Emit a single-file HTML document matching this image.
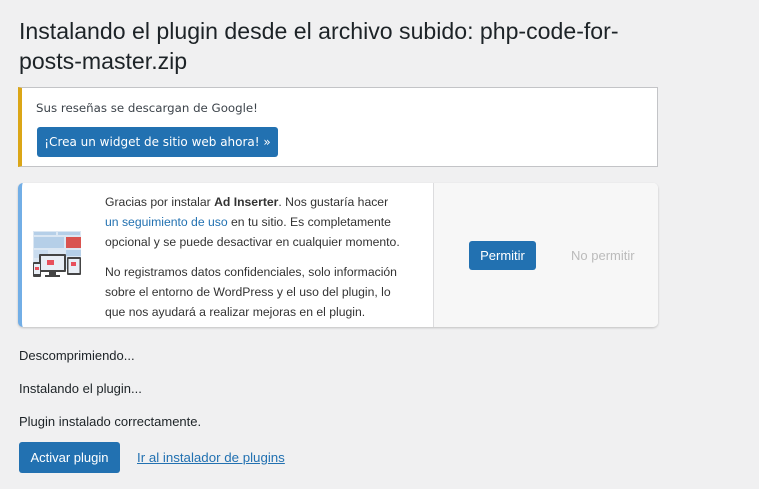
<!DOCTYPE html>
<html><head><meta charset="utf-8"><style>
body{margin:0;background:#f0f0f1;font-family:"Liberation Sans",sans-serif;color:#1d2327;width:759px;height:489px;overflow:hidden;position:relative}
.a{position:absolute}
h1{position:absolute;left:19px;top:16px;margin:0;font-weight:400;font-size:23.1px;line-height:30px;width:640px}
.notice{left:18px;top:87px;width:635px;height:78px;background:#fff;border:1px solid #c3c4c7;border-left:4px solid #dba617}
.notice p{position:absolute;left:14px;top:13px;margin:0;font-family:"DejaVu Sans",sans-serif;font-size:11.8px;color:#3c434a}
.btn{background:#2271b1;color:#fff;border-radius:3px;position:absolute}
.notice .btn{left:15px;top:39px;width:241px;height:30px;font-family:"DejaVu Sans",sans-serif;font-size:12px;line-height:30px;text-align:center}
.card{left:18px;top:183px;width:640px;height:144px;background:#fff;border-radius:5px;box-shadow:0 1px 2px rgba(0,0,0,.2);overflow:hidden;border-left:4px solid #72aee6;box-sizing:border-box}
.right{position:absolute;left:411px;top:0;width:229px;height:144px;background:#f7f7f7;border-left:1px solid #dcdcde}
.txt{position:absolute;left:83px;top:9px;width:320px;font-size:12.2px;line-height:20px;color:#333;white-space:nowrap}
.txt p{margin:0 0 10px}
.txt a{color:#2271b1;text-decoration:none}
.st{left:19px;font-size:13px}
</style></head><body>
<h1>Instalando el plugin desde el archivo subido: php-code-for-posts-master.zip</h1>
<div class="a notice"><p>Sus reseñas se descargan de Google!</p><div class="btn">¡Crea un widget de sitio web ahora! »</div></div>
<div class="a card">
<svg class="a" style="left:11px;top:48px" width="50" height="50" viewBox="0 0 50 50">
<rect x="0" y="0" width="48" height="38" fill="#dbe7f3"/>
<rect x="1" y="1" width="22" height="3" fill="#b5cfe8"/><rect x="25" y="1" width="22" height="3" fill="#b5cfe8"/>
<rect x="1" y="6" width="30" height="11" fill="#b5cfe8"/><rect x="33" y="6" width="15" height="11" fill="#d9534f"/>
<rect x="1" y="19" width="14" height="8" fill="#c9dcef"/><rect x="33" y="19" width="15" height="6" fill="#b5cfe8"/>
<rect x="6" y="23" width="27" height="18" rx="1" fill="#444"/><rect x="8" y="25" width="23" height="14" fill="#e8eef5"/>
<rect x="14" y="29" width="7" height="5" fill="#e8505b"/><rect x="16" y="41" width="7" height="3" fill="#444"/><rect x="12" y="44" width="15" height="2" fill="#444"/>
<rect x="34" y="26" width="14" height="18" rx="1" fill="#444"/><rect x="35.5" y="28" width="11" height="14" fill="#e8eef5"/><rect x="38" y="31" width="5" height="4" fill="#e8505b"/>
<rect x="0" y="31" width="8" height="15" rx="1" fill="#444"/><rect x="1" y="33" width="6" height="10" fill="#e8eef5"/><rect x="2" y="36" width="4" height="3" fill="#e8505b"/>
</svg>
<div class="txt"><p>Gracias por instalar <b>Ad Inserter</b>. Nos gustaría hacer<br><a>un seguimiento de uso</a> en tu sitio. Es completamente<br>opcional y se puede desactivar en cualquier momento.</p><p>No registramos datos confidenciales, solo información<br>sobre el entorno de WordPress y el uso del plugin, lo<br>que nos ayudará a realizar mejoras en el plugin.</p></div>
<div class="right"><div class="btn" style="left:35px;top:58px;width:67px;height:29px;line-height:29px;text-align:center;font-size:13px">Permitir</div>
<div class="a" style="left:137px;top:65px;font-size:13px;color:#bbb">No permitir</div></div>
</div>
<div class="a st" style="top:348px">Descomprimiendo...</div>
<div class="a st" style="top:381px">Instalando el plugin...</div>
<div class="a st" style="top:414px">Plugin instalado correctamente.</div>
<div class="btn" style="left:19px;top:442px;width:101px;height:31px;line-height:31px;text-align:center;font-size:13px">Activar plugin</div>
<div class="a" style="left:137px;top:450px;font-size:13.3px;color:#2271b1;text-decoration:underline">Ir al instalador de plugins</div>
</body></html>
